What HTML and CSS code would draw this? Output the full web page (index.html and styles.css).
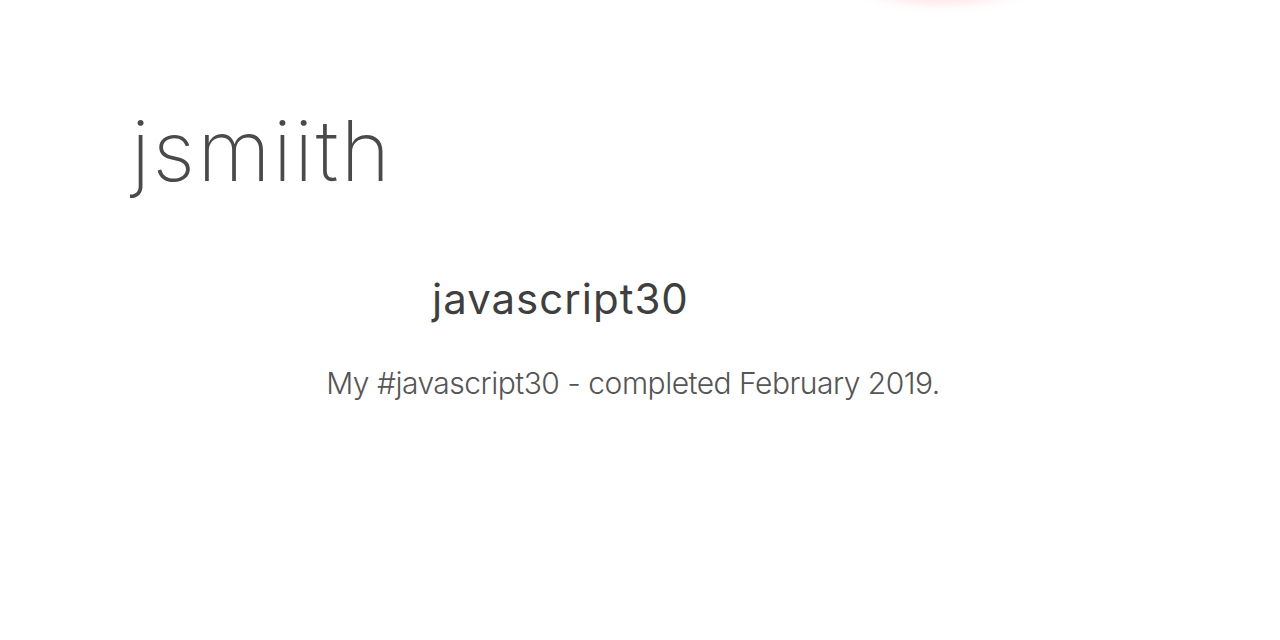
FILE: index.html
```html
<!DOCTYPE html>
<html>
<head>
<meta charset="utf-8">
<link rel="stylesheet" href="styles.css">
</head>
<body>
<div class="glow"></div>
<header class="brand">jsmiith</header>
<main class="project">
  <h1 class="title">javascript30</h1>
  <p class="desc">My #javascript30 - completed February 2019.</p>
</main>
</body>
</html>
```
FILE: styles.css
```css
html, body {
  margin: 0;
  padding: 0;
  background: #fff;
  height: 640px;
  overflow: hidden;
  font-family: Inter, "Open Sans", sans-serif;
  color: #444;
}
.glow {
  position: absolute;
  top: -40px;
  left: 860px;
  width: 165px;
  height: 40px;
  border-radius: 50%;
  box-shadow: 0 0 12px 2px rgba(255, 120, 140, 0.25);
}
.brand {
  padding: 96px 0 0 131px;
  font-size: 84px;
  font-weight: 200;
  letter-spacing: 2.5px;
  line-height: 110px;
  color: #4a4a4a;
}
.project {
  display: flex;
  flex-direction: column;
}
.title {
  margin: 68px 0 0 432px;
  font-size: 42px;
  font-weight: 400;
  letter-spacing: 1px;
  line-height: 50px;
  color: #3f3f3f;
}
.desc {
  margin: 42px 0 0 0;
  text-align: center;
  padding-right: 14px;
  font-size: 30px;
  font-weight: 300;
  letter-spacing: -0.5px;
  line-height: 34px;
  color: #555;
}
```
